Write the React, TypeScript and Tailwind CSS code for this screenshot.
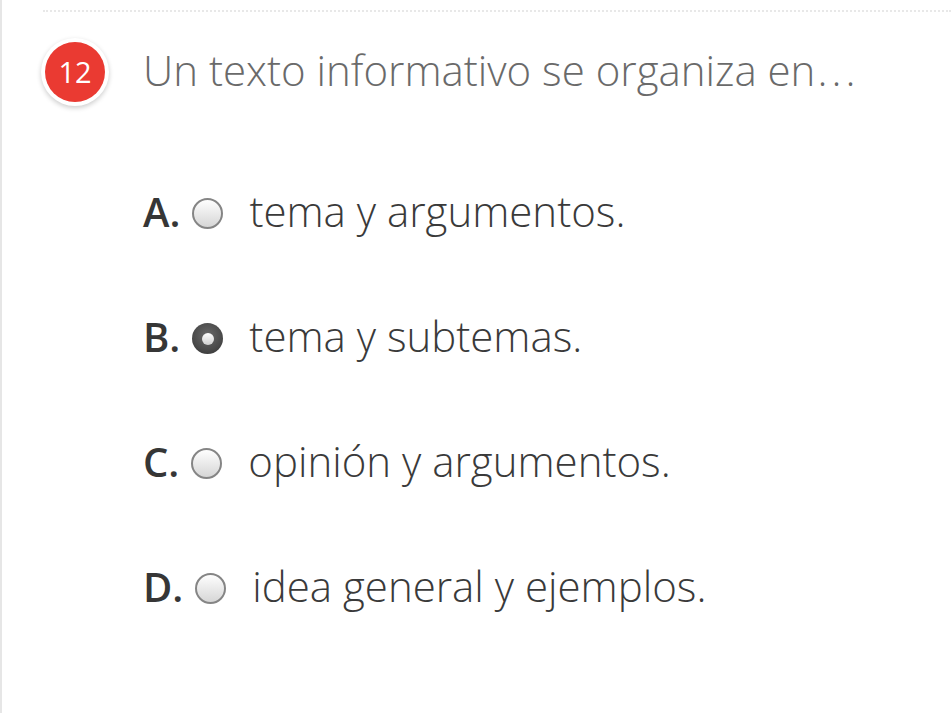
import React from "react";

const options = [
  { l: "A.", t: "tema y argumentos.", sel: false },
  { l: "B.", t: "tema y subtemas.", sel: true },
  { l: "C.", t: "opinión y argumentos.", sel: false },
  { l: "D.", t: "idea general y ejemplos.", sel: false },
];

function Radio({ sel }: { sel: boolean }) {
  if (sel) {
    return (
      <div className="w-[31px] h-[31px] shrink-0 rounded-full flex items-center justify-center bg-[radial-gradient(circle_at_50%_40%,#6a6a6a_0%,#4a4a4a_60%,#2e2e2e_100%)]">
        <div className="w-[12px] h-[12px] rounded-full bg-[linear-gradient(#ffffff,#cfcfcf)]" />
      </div>
    );
  }
  return (
    <div className="w-[31px] h-[31px] shrink-0 rounded-full border-2 border-[#858585] bg-[linear-gradient(#fefefe,#d6d6d6)]" />
  );
}

export default function App() {
  return (
    <div className="w-[951px] h-[713px] bg-white flex overflow-hidden" style={{ fontFamily: '"Open Sans", sans-serif' }}>
      <div className="w-[2px] bg-[#e6e6e6] shrink-0" />
      <div className="flex-1 flex flex-col">
        <div className="ml-[41px] mt-[10px] border-t-2 border-dotted border-[#e8e8e8]" />
        <div className="flex items-center mt-[26px] ml-[39px]">
          <div className="w-[68px] h-[68px] rounded-full bg-white shadow-[0_2px_5px_rgba(0,0,0,0.2)] flex items-center justify-center">
            <div className="w-[60px] h-[60px] rounded-full bg-[#ea3a32] flex items-center justify-center text-white text-[29px] font-medium leading-none pb-[2px]">
              12
            </div>
          </div>
          <div className="ml-[34px] text-[42px] font-light text-[#6a6a6a] leading-none pb-[4px] whitespace-nowrap">
            Un texto informativo se organiza en<span className="tracking-[4px] ml-[2px]">...</span>
          </div>
        </div>
        <div className="flex flex-col ml-[141px] mt-[92px] gap-[94px]">
          {options.map((o) => (
            <div key={o.l} className="flex items-center h-[31px]">
              <span className="text-[40px] font-semibold text-[#363636] leading-none pb-[3px]">{o.l}</span>
              <div className="ml-[12px]"><Radio sel={o.sel} /></div>
              <span className="ml-[26px] text-[42px] font-light text-[#3a3a3a] leading-none pb-[6px] whitespace-nowrap">{o.t}</span>
            </div>
          ))}
        </div>
      </div>
    </div>
  );
}
